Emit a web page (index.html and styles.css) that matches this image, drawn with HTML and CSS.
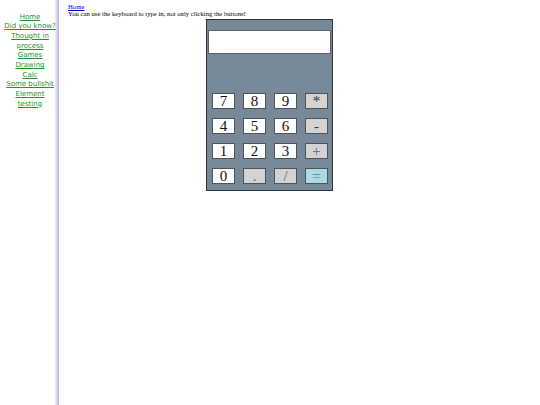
FILE: index.html
```html
<!DOCTYPE html>
<html>
<head>
<meta charset="utf-8">
<title>Calc</title>
<link rel="stylesheet" href="styles.css">
</head>
<body>
<div class="layout">
  <nav class="sidebar">
    <a href="#">Home</a>
    <a href="#">Did you know?</a>
    <a href="#">Thought in process</a>
    <a href="#">Games</a>
    <a href="#">Drawing</a>
    <a href="#">Calc</a>
    <a href="#">Some bullshit</a>
    <a href="#">Element testing</a>
  </nav>
  <main class="content">
    <a href="#" class="crumb">Home</a>
    <p class="note">You can use the keyboard to type in, not only clicking the buttons!</p>
    <div class="calc">
      <div class="display"></div>
      <div class="keys">
        <button class="key">7</button>
        <button class="key">8</button>
        <button class="key">9</button>
        <button class="key op">*</button>
        <button class="key">4</button>
        <button class="key">5</button>
        <button class="key">6</button>
        <button class="key op">-</button>
        <button class="key">1</button>
        <button class="key">2</button>
        <button class="key">3</button>
        <button class="key op light">+</button>
        <button class="key">0</button>
        <button class="key op light">.</button>
        <button class="key op light">/</button>
        <button class="key eq">=</button>
      </div>
    </div>
  </main>
</div>
</body>
</html>
```

FILE: styles.css
```css
html, body {
  margin: 0;
  padding: 0;
  background: #ffffff;
}

.layout {
  display: flex;
  min-height: 100vh;
}

.sidebar {
  width: 54px;
  flex: none;
  padding: 12.5px 2px 0 3px;
  display: flex;
  flex-direction: column;
  align-items: center;
  font-family: "DejaVu Sans", Verdana, sans-serif;
  font-size: 7px;
  line-height: 9.7px;
  text-align: center;
  background-image: linear-gradient(to right, #f3eff9, #d9cdec 50%, #c4b0e2);
  background-size: 4px 100%;
  background-position: right top;
  background-repeat: no-repeat;
}

.sidebar a {
  color: #2a922a;
  text-decoration: underline;
}

.content {
  flex: 1;
  padding: 3px 0 0 9px;
  font-family: "Liberation Serif", "Times New Roman", serif;
  font-size: 6.7px;
  line-height: 7px;
  color: #000;
}

.crumb {
  display: block;
  color: #0000ee;
  text-decoration: underline;
}

.note {
  margin: 0;
}

.calc {
  width: 125px;
  margin: 2px 0 0 138px;
  border: 1px solid #2f3338;
  background: #778899;
  padding: 10px 0 6px;
}

.display {
  width: 121px;
  height: 22px;
  margin: 0 1px;
  background: #ffffff;
  border: 1px solid #5a636c;
}

.keys {
  margin-top: 39px;
  padding: 0 4px 0 5px;
  display: grid;
  grid-template-columns: repeat(4, 23px);
  grid-auto-rows: 16px;
  column-gap: 8px;
  row-gap: 9px;
}

.key {
  margin: 0;
  padding: 0;
  box-sizing: border-box;
  width: 23px;
  height: 16px;
  border: 1px solid #4f5458;
  background: #ffffff;
  color: #111;
  font-family: "Liberation Serif", "Times New Roman", serif;
  font-size: 15px;
  line-height: 14px;
  text-align: center;
}

.key.op {
  background: #d3d3d3;
  color: #333;
}

.key.op.light {
  color: #666;
}

.key.eq {
  background: #add8e6;
  color: #6a7a80;
}
```
